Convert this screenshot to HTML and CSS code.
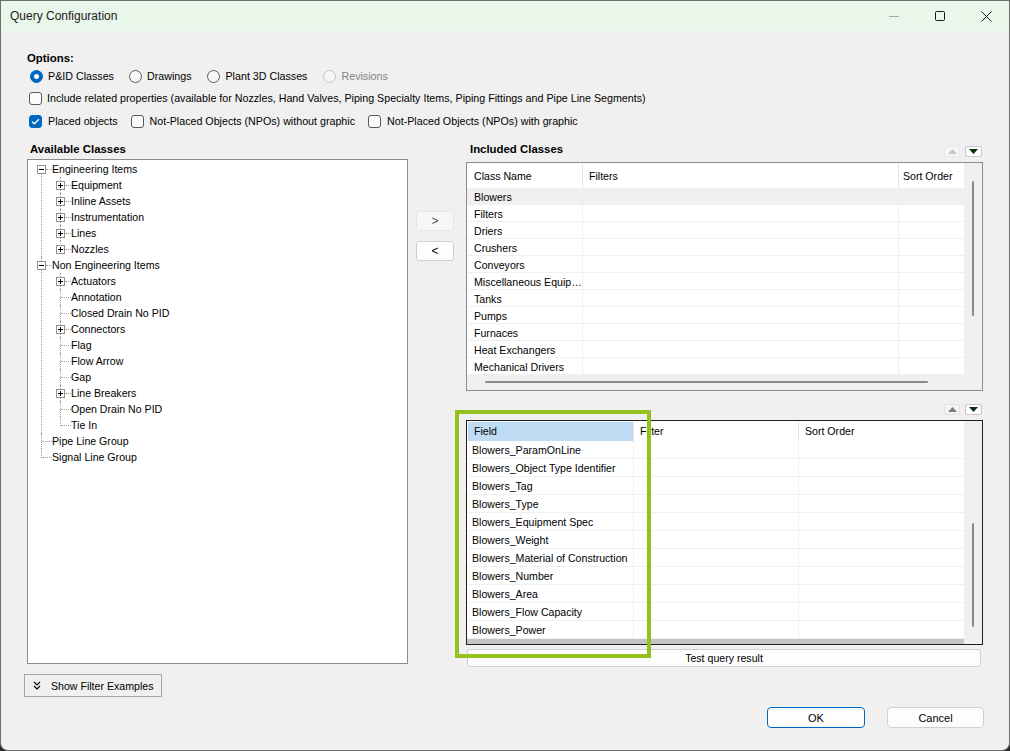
FILE: index.html
```html
<!DOCTYPE html>
<html>
<head>
<meta charset="utf-8">
<title>Query Configuration</title>
<link rel="stylesheet" href="styles.css">
</head>
<body>
<div class="window">
  <div class="titlebar">
    <span class="title">Query Configuration</span>
    <div class="caps">
      <span class="cap"><svg width="10" height="10" viewBox="0 0 10 10"><line x1="0" y1="5.5" x2="10" y2="5.5" stroke="#a8a8a8" stroke-width="1"/></svg></span>
      <span class="cap"><svg width="10" height="10" viewBox="0 0 10 10"><rect x="0.5" y="0.5" width="9" height="9" rx="1" fill="none" stroke="#1b1b1b" stroke-width="1"/></svg></span>
      <span class="cap"><svg width="11" height="11" viewBox="0 0 11 11"><path d="M0.5 0.5L10.5 10.5M10.5 0.5L0.5 10.5" stroke="#1b1b1b" stroke-width="1" fill="none"/></svg></span>
    </div>
  </div>

  <div class="content">
    <div class="opt-label">Options:</div>
    <div class="opt-row radios">
      <label class="item"><span class="rb on"></span>P&amp;ID Classes</label>
      <label class="item"><span class="rb"></span>Drawings</label>
      <label class="item"><span class="rb"></span>Plant 3D Classes</label>
      <label class="item dis"><span class="rb"></span>Revisions</label>
    </div>
    <div class="opt-row cbrow1">
      <label class="item"><span class="cb"></span>Include related properties (available for Nozzles, Hand Valves, Piping Specialty Items, Piping Fittings and Pipe Line Segments)</label>
    </div>
    <div class="opt-row cbrow2">
      <label class="item"><span class="cb on"><svg width="9" height="7" viewBox="0 0 9 7"><path d="M1 3.6L3.3 5.8L8 1.2" fill="none" stroke="#fff" stroke-width="1.3"/></svg></span>Placed objects</label>
      <label class="item"><span class="cb"></span>Not-Placed Objects (NPOs) without graphic</label>
      <label class="item"><span class="cb"></span>Not-Placed Objects (NPOs) with graphic</label>
    </div>

    <div class="main">
      <div class="left">
        <div class="pane-title">Available Classes</div>
        <div class="tree">
          <ul class="troot">
            <li class="first">
              <div class="node l0"><span class="exp"></span><span class="hl"></span><span class="tx">Engineering Items</span></div>
              <ul class="sub">
                <li><div class="node l1"><span class="exp plus"></span><span class="hl"></span><span class="tx">Equipment</span></div></li>
                <li><div class="node l1"><span class="exp plus"></span><span class="hl"></span><span class="tx">Inline Assets</span></div></li>
                <li><div class="node l1"><span class="exp plus"></span><span class="hl"></span><span class="tx">Instrumentation</span></div></li>
                <li><div class="node l1"><span class="exp plus"></span><span class="hl"></span><span class="tx">Lines</span></div></li>
                <li class="last"><div class="node l1"><span class="exp plus"></span><span class="hl"></span><span class="tx">Nozzles</span></div></li>
              </ul>
            </li>
            <li>
              <div class="node l0"><span class="exp"></span><span class="hl"></span><span class="tx">Non Engineering Items</span></div>
              <ul class="sub">
                <li><div class="node l1"><span class="exp plus"></span><span class="hl"></span><span class="tx">Actuators</span></div></li>
                <li><div class="node l1 leaf"><span class="hl"></span><span class="tx">Annotation</span></div></li>
                <li><div class="node l1 leaf"><span class="hl"></span><span class="tx">Closed Drain No PID</span></div></li>
                <li><div class="node l1"><span class="exp plus"></span><span class="hl"></span><span class="tx">Connectors</span></div></li>
                <li><div class="node l1 leaf"><span class="hl"></span><span class="tx">Flag</span></div></li>
                <li><div class="node l1 leaf"><span class="hl"></span><span class="tx">Flow Arrow</span></div></li>
                <li><div class="node l1 leaf"><span class="hl"></span><span class="tx">Gap</span></div></li>
                <li><div class="node l1"><span class="exp plus"></span><span class="hl"></span><span class="tx">Line Breakers</span></div></li>
                <li><div class="node l1 leaf"><span class="hl"></span><span class="tx">Open Drain No PID</span></div></li>
                <li class="last"><div class="node l1 leaf"><span class="hl"></span><span class="tx">Tie In</span></div></li>
              </ul>
            </li>
            <li><div class="node l0 leaf"><span class="hl"></span><span class="tx">Pipe Line Group</span></div></li>
            <li class="last"><div class="node l0 leaf"><span class="hl"></span><span class="tx">Signal Line Group</span></div></li>
          </ul>
        </div>
      </div>

      <div class="mid">
        <button class="mv dis">&gt;</button>
        <button class="mv">&lt;</button>
      </div>

      <div class="right">
        <div class="rhead">
          <span class="pane-title">Included Classes</span>
          <div class="arrows">
            <span class="ab dis"><svg width="9" height="5" viewBox="0 0 9 5"><path d="M0 5L4.5 0L9 5Z" fill="#c6c6c6"/></svg></span>
            <span class="ab dn"><svg width="9" height="5" viewBox="0 0 9 5"><path d="M0 0L4.5 5L9 0Z" fill="#0d2a0d"/></svg></span>
          </div>
        </div>

        <div class="grid g1">
          <div class="gmain">
            <div class="cols">
              <div class="r hdr"><span>Class Name</span><span>Filters</span><span>Sort Order</span></div>
              <div class="r sel"><span>Blowers</span><span></span><span></span></div>
              <div class="r"><span>Filters</span><span></span><span></span></div>
              <div class="r"><span>Driers</span><span></span><span></span></div>
              <div class="r"><span>Crushers</span><span></span><span></span></div>
              <div class="r"><span>Conveyors</span><span></span><span></span></div>
              <div class="r"><span>Miscellaneous Equip…</span><span></span><span></span></div>
              <div class="r"><span>Tanks</span><span></span><span></span></div>
              <div class="r"><span>Pumps</span><span></span><span></span></div>
              <div class="r"><span>Furnaces</span><span></span><span></span></div>
              <div class="r"><span>Heat Exchangers</span><span></span><span></span></div>
              <div class="r"><span>Mechanical Drivers</span><span></span><span></span></div>
            </div>
            <div class="vscroll"><div class="vthumb"></div></div>
          </div>
          <div class="hscroll"><div class="hthumb"></div></div>
        </div>

        <div class="rhead2">
          <div class="arrows">
            <span class="ab up2"><svg width="9" height="5" viewBox="0 0 9 5"><path d="M0 5L4.5 0L9 5Z" fill="#7c7c7c"/></svg></span>
            <span class="ab dn"><svg width="9" height="5" viewBox="0 0 9 5"><path d="M0 0L4.5 5L9 0Z" fill="#0d2a0d"/></svg></span>
          </div>
        </div>

        <div class="g2wrap">
          <div class="grid g2">
            <div class="gmain">
              <div class="cols">
                <div class="r hdr"><span class="hot">Field</span><span>Filter</span><span>Sort Order</span></div>
                <div class="r"><span>Blowers_ParamOnLine</span><span></span><span></span></div>
                <div class="r"><span>Blowers_Object Type Identifier</span><span></span><span></span></div>
                <div class="r"><span>Blowers_Tag</span><span></span><span></span></div>
                <div class="r"><span>Blowers_Type</span><span></span><span></span></div>
                <div class="r"><span>Blowers_Equipment Spec</span><span></span><span></span></div>
                <div class="r"><span>Blowers_Weight</span><span></span><span></span></div>
                <div class="r"><span>Blowers_Material of Construction</span><span></span><span></span></div>
                <div class="r"><span>Blowers_Number</span><span></span><span></span></div>
                <div class="r"><span>Blowers_Area</span><span></span><span></span></div>
                <div class="r"><span>Blowers_Flow Capacity</span><span></span><span></span></div>
                <div class="r"><span>Blowers_Power</span><span></span><span></span></div>
              </div>
              <div class="vscroll"><div class="vthumb"></div></div>
            </div>
            <div class="hscroll"><div class="hbar"></div></div>
          </div>
          <div class="highlight"></div>
        </div>

        <button class="test">Test query result</button>
      </div>
    </div>

    <button class="showf"><svg width="8" height="9" viewBox="0 0 8 9"><path d="M1 1L4 4L7 1M1 5L4 8L7 5" fill="none" stroke="#000" stroke-width="1.2"/></svg><span>Show Filter Examples</span></button>

    <div class="dlg">
      <button class="btn ok">OK</button>
      <button class="btn">Cancel</button>
    </div>
  </div>
</div>
</body>
</html>
```
FILE: styles.css
```css
* { box-sizing: border-box; }
html, body { margin: 0; padding: 0; background: #2a2a2a; }
body {
  font-family: "Liberation Sans", Arial, sans-serif;
  font-size: 10.6px;
  color: #000;
}
button { font-family: inherit; font-size: inherit; color: inherit; padding: 0; margin: 0; cursor: default; }

.window {
  width: 1010px;
  height: 751px;
  background: #f0f0f0;
  border: 1px solid #6e6e6e;
  border-radius: 0 0 8px 8px;
  overflow: hidden;
  display: flex;
  flex-direction: column;
}

/* title bar */
.titlebar {
  flex: none;
  height: 30px;
  background: #e9f6ea;
  display: flex;
  align-items: center;
  padding-left: 9px;
}
.title { font-size: 12px; color: #1b1b1b; }
.caps { margin-left: auto; display: flex; height: 100%; }
.cap { width: 46px; display: flex; align-items: center; justify-content: center; }

/* content */
.content { padding: 18px 25px 0 26px; }

.opt-label { height: 18px; line-height: 18px; font-weight: bold; font-size: 11.4px; }
.opt-row { height: 18px; display: flex; align-items: center; white-space: nowrap; font-size: 10.7px; }
.radios { padding-left: 3px; gap: 16px; }
.cbrow1 { margin-top: 4px; padding-left: 2px; }
.cbrow2 { margin-top: 5px; padding-left: 2px; gap: 13px; }
.item { display: flex; align-items: center; gap: 5px; }
.cbrow2 .item { gap: 6px; }
.radios .item:nth-child(2) { margin-left: -1px; }
.item.dis { color: #838383; }

.rb {
  width: 13px; height: 13px; border-radius: 50%;
  border: 1px solid #5a5a5a; background: #f7f7f7;
  display: flex; align-items: center; justify-content: center;
}
.rb.on { background: #0067c0; border-color: #0067c0; }
.rb.on::after { content: ""; width: 5px; height: 5px; border-radius: 50%; background: #fff; }
.dis .rb { border-color: #c4c4c4; background: #f5f5f5; }

.cb {
  width: 13px; height: 13px; border-radius: 3px;
  border: 1px solid #5a5a5a; background: #fbfbfb;
  display: flex; align-items: center; justify-content: center;
}
.cb.on { background: #0067c0; border-color: #0067c0; }

/* main area */
.main { margin-top: 9px; display: flex; height: 528px; }
.left { width: 381px; display: flex; flex-direction: column; }
.pane-title { height: 20px; line-height: 20px; font-weight: bold; font-size: 11.4px; padding-left: 3px; }

.tree {
  height: 505px;
  border: 1px solid #8c8c8c;
  background: #fff;
  padding-top: 1px;
  overflow: hidden;
}
.tree ul { list-style: none; margin: 0; padding: 0; }
.tree li { position: relative; }
.tree li::before {
  content: "";
  position: absolute;
  top: 0; bottom: 0;
  border-left: 1px dotted #a0a0a0;
}
.troot > li::before { left: 13px; }
.troot > li.first::before { top: 8px; }
.sub > li::before { left: 32px; }
.tree li.last::before { bottom: auto; height: 9px; }

.node { height: 16px; display: flex; align-items: flex-start; white-space: nowrap; }
.node.l0 { padding-left: 9px; }
.node.l0.leaf { padding-left: 14px; }
.node.l1 { padding-left: 28px; }
.node.l1.leaf { padding-left: 33px; }
.exp {
  position: relative; z-index: 1;
  flex: none;
  width: 9px; height: 9px; margin-top: 4px;
  border: 1px solid #919191; background: #fff;
}
.exp::before {
  content: ""; position: absolute; left: 1px; top: 3px; width: 5px; height: 1px; background: #000;
}
.exp.plus::after {
  content: ""; position: absolute; left: 3px; top: 1px; width: 1px; height: 5px; background: #000;
}
.hl { flex: none; width: 6px; margin-top: 8px; border-top: 1px dotted #a0a0a0; }
.leaf .hl { width: 10px; }
.tx { line-height: 17px; }

.mid { width: 58px; padding: 72px 0 0 8px; display: flex; flex-direction: column; gap: 10px; }
.mv {
  width: 38px; height: 20px; border-radius: 3px;
  border: 1px solid #d0d0d0; background: #fdfdfd;
  font-size: 12px; line-height: 18px;
}
.mv.dis { border-color: #e6e6e6; background: #f6f6f6; color: #555; }

.right { width: 517px; display: flex; flex-direction: column; }
.rhead { height: 23px; display: flex; justify-content: space-between; align-items: flex-start; }
.rhead .pane-title { padding-left: 4px; }
.rhead .arrows { margin-top: 7px; }
.rhead2 { height: 29px; display: flex; justify-content: flex-end; align-items: flex-start; }
.rhead2 .arrows { margin-top: 13px; }
.arrows { display: flex; gap: 5px; margin-right: 1px; }
.ab {
  width: 16px; height: 11px; border-radius: 2px;
  display: flex; align-items: center; justify-content: center;
  border: 1px solid #e8e8e8; background: #f6f6f6;
}
.ab.dn { width: 17px; background: #fff; border-color: #c8c8c8; }
.ab.up2 { border-color: #e2e2e2; background: #f4f4f4; }

/* grids */
.grid { background: #f0f0f0; display: flex; flex-direction: column; }
.g1 { height: 229px; border: 1px solid #8c8c8c; }
.gmain { display: flex; }
.cols { width: 497px; background: #fff; }
.r { display: grid; }
.r > span { overflow: hidden; white-space: nowrap; border-right: 1px solid #f0f0f0; border-bottom: 1px solid #f0f0f0; }
.r > span:last-child { border-right: none; }

.g1 .r { grid-template-columns: 116px 316px 65px; height: 17px; }
.g1 .r > span { line-height: 18px; padding-left: 7px; }
.g1 .r > span:nth-child(2) { padding-left: 6px; }
.g1 .r > span:nth-child(3) { padding-left: 4px; }
.g1 .r.hdr { height: 25px; }
.g1 .r.hdr > span { line-height: 27px; border-bottom: none; border-right-color: #e5e5e5; }
.g1 .r.sel { background: #f0f0f0; }
.g1 .vscroll { width: 18px; height: 212px; padding: 18px 0 0 8px; }
.vthumb { width: 2px; background: #8a8a8a; border-radius: 1px; }
.g1 .vthumb { height: 135px; }
.g1 .hscroll { height: 15px; padding: 6px 0 0 18px; }
.hthumb { width: 443px; height: 2px; background: #8a8a8a; border-radius: 1px; }

.g2wrap { position: relative; }
.g2 { height: 225px; border: 1px solid #1e1e1e; }
.g2 .r { grid-template-columns: 167px 165px 165px; height: 18px; }
.g2 .r > span { line-height: 19px; padding-left: 5px; }
.g2 .r > span:nth-child(n+2) { padding-left: 6px; }
.g2 .r.hdr { height: 20px; padding-top: 1px; }
.g2 .r.hdr > span { line-height: 18px; border-bottom: none; border-right-color: #e5e5e5; }
.g2 .r.hdr > span.hot { background: #bfdcf4; margin-left: 1px; padding-left: 6px; }
.g2 .vscroll { width: 18px; height: 218px; padding: 102px 0 0 8px; }
.g2 .vthumb { height: 104px; }
.g2 .hscroll { height: 5px; }
.hbar { width: 497px; height: 5px; background: #c4c4c4; }

.highlight {
  position: absolute;
  left: -11px; top: -10px;
  width: 196px; height: 248px;
  border: 4px solid #95c11f;
  pointer-events: none;
}

.test {
  margin-top: 4px; margin-left: 1px;
  width: 514px; height: 18px;
  border: 1px solid #d0d0d0; border-radius: 3px;
  background: #fdfdfd;
  line-height: 16px;
}

.showf {
  margin-top: 7px; margin-left: -3px;
  width: 138px; height: 23px;
  border: 1px solid #a7a7a7; background: #f0f0f0;
  display: flex; align-items: center;
  padding-left: 8px;
}
.showf svg { flex: none; }
.showf span { margin-left: 10px; }

.dlg { margin-top: 10px; display: flex; justify-content: flex-end; gap: 22px; }
.btn {
  width: 97px; height: 21px;
  border: 1px solid #d0d0d0; border-radius: 4px;
  background: #fdfdfd;
  font-size: 11px;
}
.btn.ok { width: 98px; border-color: #0067c0; }
```
